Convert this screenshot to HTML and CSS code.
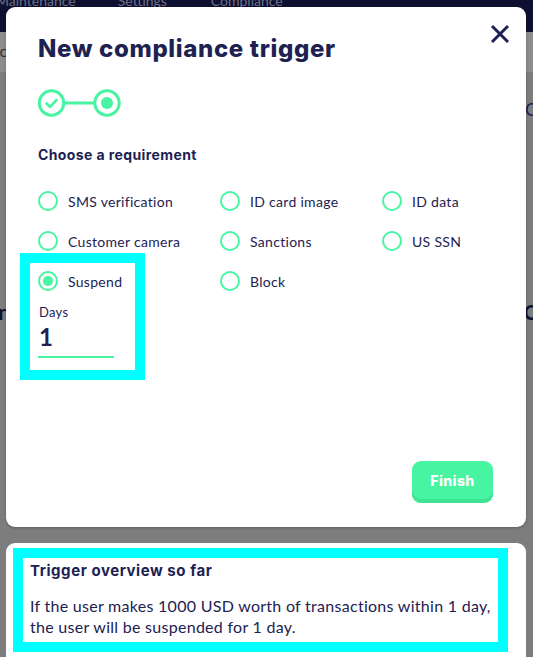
FILE: index.html
```html
<!DOCTYPE html>
<html>
<head>
<meta charset="utf-8">
<link rel="stylesheet" href="styles.css">
</head>
<body>
<div class="underlay">
  <nav class="topnav">
    <span class="navlink nl1">Maintenance</span>
    <span class="navlink nl2">Settings</span>
    <span class="navlink nl3">Compliance</span>
  </nav>
  <div class="subhead"><span class="subtext">Co</span></div>
  <div class="bgrow bgrow1"><span></span><span class="bgtxt">Co</span></div>
  <div class="bgrow bgrow2"><span class="bgtxt">Plan</span><span class="bgtxt">Che</span></div>
</div>

<div class="overlay">
  <section class="modal">
    <button class="close" aria-label="Close">
      <svg width="20" height="20" viewBox="0 0 20 20"><path d="M2 2 L18 18 M18 2 L2 18" stroke="#1d2252" stroke-width="3" fill="none" stroke-linecap="butt"/></svg>
    </button>
    <h1 class="title">New compliance trigger</h1>
    <div class="stepper">
      <svg width="90" height="30" viewBox="0 0 90 30">
        <circle cx="14.5" cy="15" r="12.2" fill="none" stroke="#47f4a1" stroke-width="3"/>
        <path d="M9.5 15.5 L13 18.8 L19.5 12" fill="none" stroke="#47f4a1" stroke-width="2.6" stroke-linecap="round" stroke-linejoin="round"/>
        <line x1="27.5" y1="15" x2="57" y2="15" stroke="#47f4a1" stroke-width="3"/>
        <circle cx="70" cy="15" r="12.2" fill="none" stroke="#47f4a1" stroke-width="3"/>
        <circle cx="70" cy="15" r="6" fill="#47f4a1"/>
      </svg>
    </div>
    <h2 class="subtitle">Choose a requirement</h2>
    <div class="options">
      <label class="opt"><span class="radio"></span>SMS verification</label>
      <label class="opt"><span class="radio"></span>ID card image</label>
      <label class="opt"><span class="radio"></span>ID data</label>
      <label class="opt"><span class="radio"></span>Customer camera</label>
      <label class="opt"><span class="radio"></span>Sanctions</label>
      <label class="opt"><span class="radio"></span>US SSN</label>
      <div class="suspend hl">
        <label class="opt"><span class="radio on"></span>Suspend</label>
        <div class="field-label">Days</div>
        <div class="field-input">1</div>
      </div>
      <label class="opt"><span class="radio"></span>Block</label>
    </div>
    <div class="footer">
      <button class="finish">Finish</button>
    </div>
  </section>

  <section class="summary">
    <div class="summary-inner hl">
      <h3 class="summary-title">Trigger overview so far</h3>
      <p class="summary-text">If the user makes 1000 USD worth of transactions within 1 day, the user will be suspended for 1 day.</p>
    </div>
  </section>
</div>
</body>
</html>
```
FILE: styles.css
```css
* { box-sizing: border-box; }
html, body { margin: 0; padding: 0; }
body {
  width: 533px;
  height: 657px;
  overflow: hidden;
  background: #7d7d7e;
  font-family: Lato, "Noto Sans", sans-serif;
  color: #1d2252;
  position: relative;
}

/* dimmed page underneath */
.underlay { height: 657px; }
.topnav {
  height: 32px;
  background: #0d1030;
  display: flex;
  align-items: flex-start;
  overflow: hidden;
}
.navlink {
  font-size: 14px;
  line-height: 14px;
  color: #6e7187;
  margin-top: -6px;
  white-space: nowrap;
}
.nl1 { margin-left: -4px; }
.nl2 { margin-left: 42px; }
.nl3 { margin-left: 44px; }
.subhead {
  height: 40px;
  background: #8d8d8f;
  display: flex;
  align-items: center;
  overflow: hidden;
}
.subtext {
  font-size: 16px;
  color: #333;
  margin-left: -11px;
  margin-top: -3px;
}
.bgrow {
  display: flex;
  justify-content: space-between;
  overflow: hidden;
  font-weight: 700;
  font-size: 20px;
  color: #0f1332;
}
.bgrow1 { margin-top: 26px; height: 24px; }
.bgrow1 .bgtxt { margin-right: -14px; font-weight: 400; color: #1d2252; font-size: 18px; }
.bgrow2 { margin-top: 178px; }
.bgrow2 .bgtxt:first-child { margin-left: -29px; }
.bgrow2 .bgtxt:last-child { margin-right: -26px; }

/* overlay with modal */
.overlay {
  position: absolute;
  inset: 0;
  padding: 7px 7px 0 6px;
  display: flex;
  flex-direction: column;
  gap: 16px;
}
.modal {
  position: relative;
  width: 520px;
  height: 520px;
  background: #fff;
  border-radius: 9px;
  box-shadow: 0 1px 3px rgba(0,0,0,0.25);
  padding: 27px 33px 24px 32px;
  display: flex;
  flex-direction: column;
  flex: none;
}
.close {
  position: absolute;
  top: 17px;
  right: 16px;
  border: 0;
  background: none;
  padding: 0;
  width: 20px;
  height: 20px;
  display: block;
}
.close svg { display: block; }
.title {
  margin: 0;
  font-family: Inter, Lato, sans-serif;
  font-weight: 800;
  font-size: 24px;
  line-height: 30px;
  letter-spacing: 0.65px;
  color: #1d2252;
}
.stepper {
  margin-top: 24px;
  margin-left: -1px;
  height: 30px;
}
.stepper svg { display: block; }
.subtitle {
  margin: 27px 0 0 0;
  font-family: Inter, Lato, sans-serif;
  font-weight: 700;
  font-size: 14px;
  line-height: 20px;
  letter-spacing: 0.4px;
  color: #1d2252;
}
.options {
  margin-top: 26px;
  display: grid;
  grid-template-columns: 182px 162px auto;
  row-gap: 20px;
  align-items: start;
}
.opt {
  display: flex;
  align-items: center;
  gap: 10px;
  height: 20px;
  font-size: 14px;
  letter-spacing: 0.3px;
  color: #1d2252;
  white-space: nowrap;
}
.radio {
  width: 20px;
  height: 20px;
  border-radius: 50%;
  border: 2.5px solid #47f4a1;
  display: flex;
  align-items: center;
  justify-content: center;
  flex: none;
}
.radio.on::after {
  content: "";
  width: 10px;
  height: 10px;
  border-radius: 50%;
  background: #47f4a1;
}
.hl { outline: 10px solid #00ffff; }
.suspend {
  justify-self: start;
  width: 105px;
  margin: -8px 0 0 -8px;
  padding: 8px 0 12px 8px;
  background: #fff;
}
.field-label {
  margin-top: 13px;
  font-size: 13px;
  line-height: 16px;
  letter-spacing: 0.3px;
  color: #1d2252;
  padding-left: 1px;
}
.field-input {
  margin-top: 3px;
  width: 76px;
  font-size: 24px;
  font-weight: 700;
  line-height: 28px;
  padding: 0 0 5px 1px;
  border-bottom: 2px solid #47f4a1;
  color: #1d2252;
}
.footer {
  margin-top: auto;
  display: flex;
  justify-content: flex-end;
}
.finish {
  width: 81px;
  height: 42px;
  border: 0;
  border-radius: 9px;
  background: #47f4a1;
  box-shadow: inset 0 -4px 0 #3fe393;
  color: #fff;
  font-family: Inter, Lato, sans-serif;
  font-weight: 800;
  font-size: 14px;
  letter-spacing: 0.4px;
  padding: 0 0 3px 0;
}

.summary {
  width: 520px;
  flex: 1;
  background: #fff;
  border-radius: 9px 9px 0 0;
  padding: 15px 0 0 17px;
}
.summary-inner {
  width: 475px;
  background: #fff;
  padding: 3px 0 5px 7px;
}
.summary-title {
  margin: 0;
  font-family: Inter, Lato, sans-serif;
  font-weight: 700;
  font-size: 15px;
  line-height: 20px;
  letter-spacing: 0.55px;
  color: #1d2252;
}
.summary-text {
  margin: 14px 0 0 0;
  font-size: 16px;
  line-height: 21px;
  letter-spacing: 0.28px;
  color: #1d2252;
}
```
